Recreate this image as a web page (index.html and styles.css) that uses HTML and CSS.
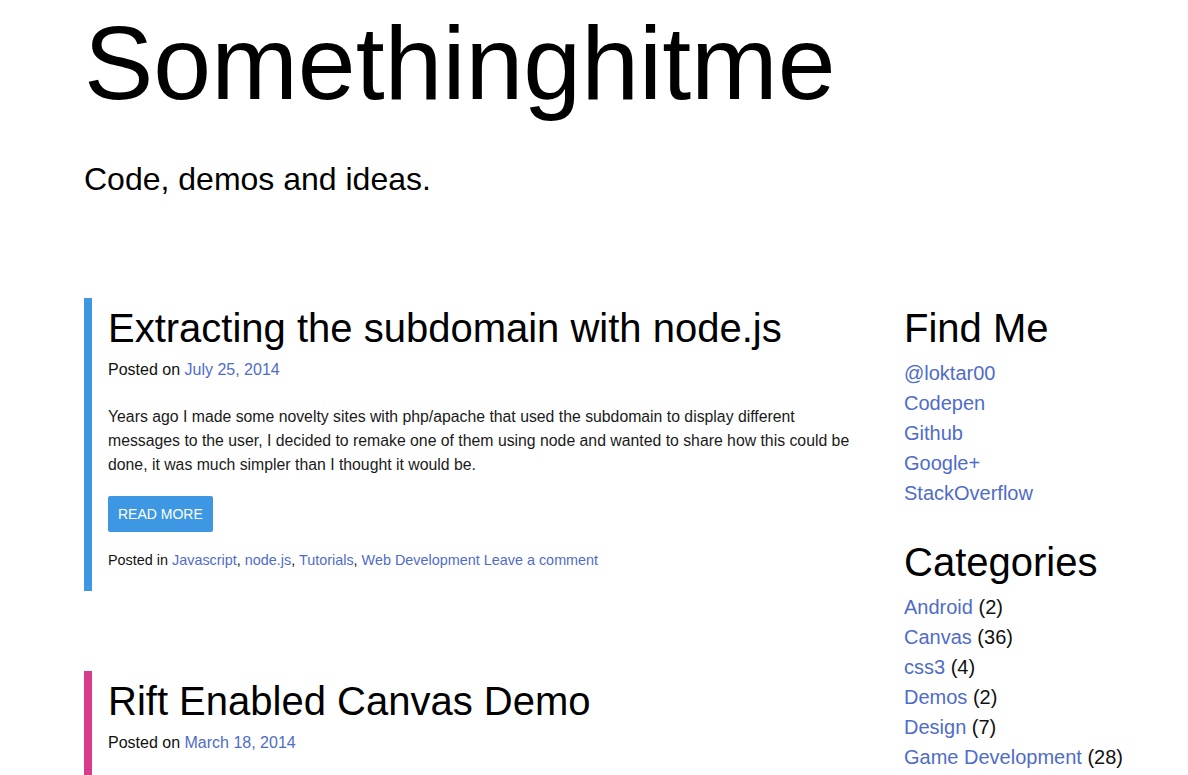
FILE: index.html
```html
<!DOCTYPE html>
<html lang="en">
<head>
<meta charset="utf-8">
<title>Somethinghitme</title>
<link rel="stylesheet" href="styles.css">
</head>
<body>
<header class="site-header">
  <h1 class="site-title">Somethinghitme</h1>
  <p class="site-desc">Code, demos and ideas.</p>
</header>
<div class="layout">
  <main class="posts">
    <article class="post post-blue">
      <h2 class="post-title">Extracting the subdomain with node.js</h2>
      <div class="post-meta">Posted on <a href="#">July 25, 2014</a></div>
      <p class="post-excerpt">Years ago I made some novelty sites with php/apache that used the subdomain to display different messages to the user, I decided to remake one of them using node and wanted to share how this could be done, it was much simpler than I thought it would be.</p>
      <a class="read-more" href="#">READ MORE</a>
      <div class="post-footer">Posted in <a href="#">Javascript</a>, <a href="#">node.js</a>, <a href="#">Tutorials</a>, <a href="#">Web Development</a> <a href="#">Leave a comment</a></div>
    </article>
    <article class="post post-pink">
      <h2 class="post-title">Rift Enabled Canvas Demo</h2>
      <div class="post-meta">Posted on <a href="#">March 18, 2014</a></div>
    </article>
  </main>
  <aside class="sidebar">
    <section class="widget">
      <h2 class="widget-title">Find Me</h2>
      <ul class="widget-list">
        <li><a href="#">@loktar00</a></li>
        <li><a href="#">Codepen</a></li>
        <li><a href="#">Github</a></li>
        <li><a href="#">Google+</a></li>
        <li><a href="#">StackOverflow</a></li>
      </ul>
    </section>
    <section class="widget">
      <h2 class="widget-title">Categories</h2>
      <ul class="widget-list">
        <li><a href="#">Android</a> (2)</li>
        <li><a href="#">Canvas</a> (36)</li>
        <li><a href="#">css3</a> (4)</li>
        <li><a href="#">Demos</a> (2)</li>
        <li><a href="#">Design</a> (7)</li>
        <li><a href="#">Game Development</a> (28)</li>
      </ul>
    </section>
  </aside>
</div>
</body>
</html>
```
FILE: styles.css
```css
html, body {
  margin: 0;
  padding: 0;
  background: #fff;
}
body {
  font-family: "Liberation Sans", Arial, sans-serif;
  color: #111;
}
a {
  color: #4f6cc8;
  text-decoration: none;
}
.site-header {
  padding: 11px 0 0 84px;
}
.site-title {
  margin: 0;
  font-size: 104px;
  line-height: 104px;
  font-weight: normal;
  color: #000;
}
.site-desc {
  margin: 48px 0 0;
  font-size: 32px;
  line-height: 32px;
  color: #000;
}
.layout {
  display: flex;
  gap: 40px;
  padding: 103px 0 0 84px;
}
.posts {
  width: 780px;
  flex: none;
}
.post {
  border-left: 8px solid #3d97e3;
  padding: 6px 0 21px 16px;
  margin-bottom: 80px;
}
.post-pink {
  border-left-color: #d73b8c;
  padding-bottom: 24px;
  margin-bottom: 0;
}
.post-title {
  margin: 0;
  font-size: 40px;
  line-height: 48px;
  font-weight: normal;
  color: #000;
}
.post-meta {
  margin-top: 6px;
  font-size: 16px;
  line-height: 24px;
  color: #111;
}
.post-excerpt {
  margin: 23px 0 0;
  font-size: 15.8px;
  line-height: 24px;
  color: #1a1a1a;
}
.read-more {
  display: inline-block;
  margin-top: 19px;
  height: 36px;
  line-height: 36px;
  padding: 0 10px;
  background: #3d97e3;
  color: #fff;
  font-size: 14px;
  border-radius: 2px;
}
.post-footer {
  margin-top: 18px;
  font-size: 14.4px;
  line-height: 20px;
  color: #111;
}
.sidebar {
  flex: 1;
  min-width: 0;
}
.widget + .widget {
  margin-top: 24px;
}
.widget-title {
  margin: 0;
  padding-top: 6px;
  font-size: 40px;
  line-height: 48px;
  font-weight: normal;
  color: #000;
}
.widget-list {
  list-style: none;
  margin: 6px 0 0;
  padding: 0;
  font-size: 20px;
  line-height: 30px;
  color: #111;
}
```
